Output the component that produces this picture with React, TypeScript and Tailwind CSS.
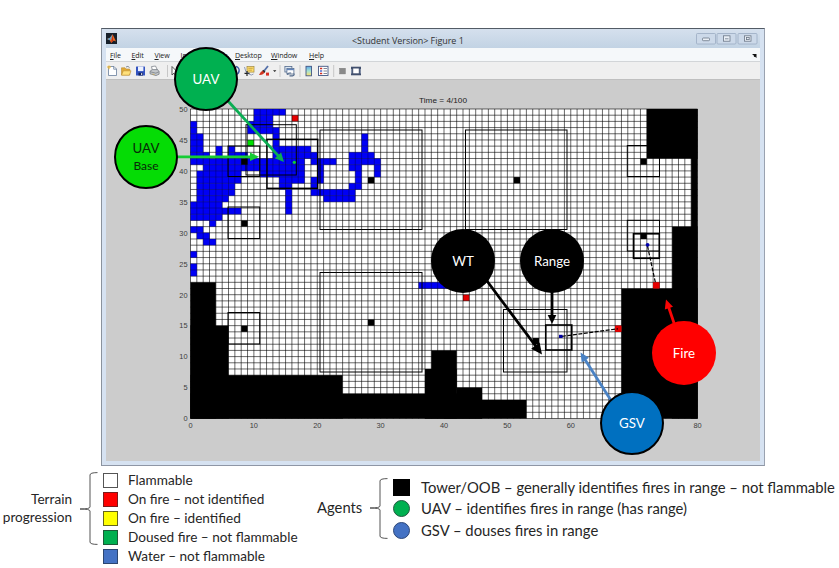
import React from "react";

const CW = 6.3375;
const CH = 6.19;

type Run = [row: number, from: number, to: number];

// Water cells as horizontal runs, counted from the top row
const water: Run[] = [
  [0, 10, 14], [1, 10, 12], [2, 0, 0], [2, 9, 12], [3, 0, 0], [3, 9, 13],
  [4, 0, 1], [4, 13, 13], [5, 0, 1], [5, 13, 13],
  [6, 0, 1], [6, 4, 4], [6, 6, 6], [6, 13, 18],
  [7, 0, 2], [7, 4, 4], [7, 6, 8], [7, 13, 19],
  [8, 0, 17], [8, 19, 22], [9, 2, 17], [9, 20, 20],
  [10, 1, 7], [10, 11, 17], [10, 20, 20],
  [11, 1, 7], [11, 14, 17], [11, 19, 20],
  [12, 1, 6], [12, 14, 15], [12, 19, 19],
  [13, 1, 6], [13, 15, 15], [13, 19, 25],
  [14, 1, 5], [14, 15, 15], [14, 21, 25],
  [15, 0, 4], [15, 15, 15], [16, 0, 7], [16, 15, 15], [17, 0, 4],
  [18, 3, 3], [19, 0, 1], [20, 1, 2], [21, 2, 3], [23, 0, 0], [25, 0, 0], [26, 0, 0],
  [4, 27, 27], [5, 27, 27], [6, 27, 27], [7, 25, 28], [8, 25, 29],
  [9, 25, 26], [9, 29, 29], [10, 26, 26], [10, 29, 29], [11, 26, 26], [12, 25, 26],
  [28, 36, 40],
];

// Out-of-bounds blocks: column, row, width, height
const blocks = [
  [0, 28, 4, 22], [0, 35, 6, 15], [0, 43, 24, 7], [0, 46, 46, 4],
  [37, 42, 1, 8], [38, 39, 4, 11], [37, 42, 5, 8], [42, 45, 4, 5], [40, 47, 13, 3],
  [72, 0, 8, 8], [79, 0, 1, 50], [76, 19, 4, 31], [68, 29, 12, 21],
];

const towers = [[8, 8], [8, 18], [8, 35], [28, 11], [51, 11], [28, 34], [54, 37], [71, 8], [71, 20]];
const fires = [[16, 1], [43, 30], [73, 28], [67, 35]];

// Detection ranges in figure pixels: left, top, right, bottom, stroke width
const ranges = [
  [320, 130, 422, 229.5, 1], [465.5, 130, 567, 229.5, 1], [320, 272.5, 422, 372, 1],
  [503.5, 309.5, 567, 372, 1], [228, 207, 259.7, 238.5, 1], [228, 312.5, 259.7, 344, 1],
  [627.3, 145.5, 659.5, 176.5, 1], [627.3, 220.3, 659.5, 251, 1], [228, 146, 259.7, 176.5, 1],
  [246, 124.7, 296.3, 175, 1], [267, 139.3, 317.7, 188.3, 1.4],
  [545.8, 325, 571.8, 350, 1.6], [633.5, 233.8, 659.3, 258.3, 1.6],
];

const xs = Array.from({ length: 81 }, (_, i) => i);
const ys = Array.from({ length: 51 }, (_, i) => i);

function Plot() {
  return (
    <svg className="block h-[381px] w-[654px]" viewBox="106 80 654 381">
      <g fontFamily="Liberation Sans, Arial, sans-serif" fontSize="7.4" fill="#3c3c3c">
        <text x="443" y="102.6" textAnchor="middle" fill="#222" textLength="48" lengthAdjust="spacingAndGlyphs">Time = 4/100</text>
        {[0, 5, 10, 15, 20, 25, 30, 35, 40, 45, 50].map((v) => (
          <text key={v} x="187.5" y={421.3 - v * CH} textAnchor="end">{v}</text>
        ))}
        {[0, 10, 20, 30, 40, 50, 60, 80].map((v) => (
          <text key={v} x={190.5 + v * CW} y="428.2" textAnchor="middle">{v}</text>
        ))}
      </g>
      <g transform="translate(190.5 109)">
        <rect width="507" height="309.5" fill="#fff" />
        {water.map(([r, a, b], i) => (
          <rect key={i} x={a * CW} y={r * CH} width={(b - a + 1) * CW} height={CH} fill="#0000f5" />
        ))}
        <rect x={9 * CW} y={5 * CH} width={CW} height={CH} fill="#00e000" />
        {fires.map(([c, r]) => (
          <rect key={c} x={c * CW} y={r * CH} width={CW} height={CH} fill="#e60000" />
        ))}
        <g stroke="#000" strokeOpacity="0.66" strokeWidth="0.9">
          {xs.map((i) => <line key={i} x1={i * CW} x2={i * CW} y1="0" y2="309.5" />)}
          {ys.map((i) => <line key={i} y1={i * CH} y2={i * CH} x1="0" x2="507" />)}
        </g>
        {water.map(([r, a, b], i) => (
          <rect key={i} x={a * CW} y={r * CH} width={(b - a + 1) * CW} height={CH} fill="#0000f5" fillOpacity="0.5" />
        ))}
        {blocks.map(([c, r, w, h], i) => (
          <rect key={i} x={c * CW} y={r * CH} width={w * CW} height={h * CH} fill="#000" />
        ))}
        {towers.map(([c, r], i) => (
          <rect key={i} x={c * CW} y={r * CH} width={CW} height={CH} fill="#000" />
        ))}
        {fires.slice(2).map(([c, r]) => (
          <rect key={c} x={c * CW} y={r * CH} width={CW} height={CH} fill="#e60000" />
        ))}
      </g>
      {ranges.map(([l, t, r, b, w], i) => (
        <rect key={i} x={l} y={t} width={r - l} height={b - t} fill="none" stroke="#000" strokeWidth={w} />
      ))}
      <path d="M562 336.3 618 328.8M647.5 246 655.5 283" stroke="#000" strokeWidth="1.2" strokeDasharray="4 1.5" fill="none" />
      <rect x="559" y="334.8" width="3.6" height="3.2" fill="#0000a0" />
      <circle cx="647.6" cy="244.8" r="1.9" fill="#0000b0" />
      <circle cx="294.3" cy="162.3" r="1.6" fill="#10d030" />
    </svg>
  );
}

function Arrow({ x1, y1, x2, y2, color, w = 2.8, head = 9 }: { x1: number; y1: number; x2: number; y2: number; color: string; w?: number; head?: number }) {
  const d = Math.hypot(x2 - x1, y2 - y1);
  const ux = (x2 - x1) / d;
  const uy = (y2 - y1) / d;
  const bx = x2 - ux * head;
  const by = y2 - uy * head;
  const k = head * 0.48;
  return (
    <g fill={color} stroke={color}>
      <line x1={x1} y1={y1} x2={bx + ux} y2={by + uy} strokeWidth={w} />
      <path stroke="none" d={`M${x2} ${y2}L${bx - uy * k} ${by + ux * k}L${bx + uy * k} ${by - ux * k}Z`} />
    </g>
  );
}

function Sep() {
  return <path d="M0 -6V6" stroke="#bcbcbc" strokeWidth="0.8" />;
}

function ToolbarIcons() {
  return (
    <svg className="block h-[18px] w-[260px]" viewBox="106 62 260 18">
      <g transform="translate(112 71)">
        <path d="M-3.5 -4.5H2L4.5 -2V4.5H-3.5Z" fill="#fff" stroke="#687d9c" strokeWidth="0.8" />
        <path d="M1.7 -4.5V-1.8H4.5" fill="none" stroke="#687d9c" strokeWidth="0.8" />
        <path d="M-5 -4H-1M-3 -5.5V-1.8" stroke="#e8b63c" strokeWidth="1.2" />
      </g>
      <g transform="translate(126 71)">
        <path d="M-4.5 4V-3.2H-1L0 -2H3.7V4Z" fill="#e2aa36" stroke="#b88c31" strokeWidth="0.6" />
        <path d="M-4.5 4.2 -2.7 -.2H5L3.4 4.2Z" fill="#ffe07a" stroke="#b88c31" strokeWidth="0.6" />
        <path d="M0 -4Q2 -5.5 3.5 -3.5" stroke="#66707d" strokeWidth="0.8" fill="none" />
      </g>
      <g transform="translate(140.5 71)">
        <rect x="-4.5" y="-4.5" width="9" height="9" fill="#3454c0" rx="0.5" />
        <rect x="-2.5" y="-4.5" width="5.4" height="4.6" fill="#edf2ff" />
        <rect x="-2" y="1.7" width="4.5" height="2.8" fill="#13245e" />
        <rect x="0.7" y="2.1" width="1" height="1.9" fill="#fff" />
      </g>
      <g transform="translate(154.5 71)" stroke="#6e747c" strokeWidth="0.7">
        <path d="M-2 -.5 -3 -4.4 1 -5 3 -.8Z" fill="#fff" />
        <path d="M-4.5 .2 -2 -1.4H3L4.6 .5V3.2L1.5 4.6 -4.5 2.8Z" fill="#c4c8cc" />
        <path d="M-4.2 .8 1.4 2.2 4.4 .7" fill="none" />
        <path d="M-2 3 0 3.6" stroke="#d4a637" />
      </g>
      <g transform="translate(167.5 71)"><Sep /></g>
      <path d="M172 66.5V75L174 73.1 175.5 76 176.7 75.4 175.3 72.7H178Z" fill="#fff" stroke="#333" strokeWidth="0.8" />
      <path d="M236 66.5A4 4 0 1 1 234 74.5" fill="none" stroke="#3b5ca5" strokeWidth="1.5" />
      <g transform="translate(249.5 71)">
        <rect x="-2.5" y="-4.4" width="7" height="5.5" fill="#ffdd6a" stroke="#9e8740" strokeWidth="0.7" />
        <path d="M-1.2 -2.7H3.2M-1.2 -.8H2.4" stroke="#b5903b" strokeWidth="0.7" />
        <path d="M-5 2.4H0M-2.5 0V5" stroke="#222" strokeWidth="1.2" />
        <path d="M-5 -4Q-4.5 1 -1 3T4 3" fill="none" stroke="#4d6290" strokeWidth="0.6" />
      </g>
      <g transform="translate(264 71)">
        <path d="M4 -5 0 0" stroke="#536fa9" strokeWidth="1.8" />
        <path d="M-5 4Q-3.5 .2 -1 -.6L1 1Q-1 4.5 -5 4Z" fill="#cf3520" />
        <path d="M-1.2 -.8 1 1.1" stroke="#292929" strokeWidth="1.4" />
        <rect x="2" y="1.6" width="3" height="3" fill="#d92e24" />
      </g>
      <path d="M273 70.2H276.4L274.7 72.1Z" fill="#222" />
      <g transform="translate(280 71)"><Sep /></g>
      <g transform="translate(289.5 71)" stroke="#52698b" strokeWidth="0.8">
        <rect x="-4.6" y="-4.6" width="7" height="5.6" fill="#dce7f4" />
        <rect x="-2.6" y="-2.6" width="7" height="5.6" fill="#fff" />
        <path d="M-2.6 -1.5H4.4" stroke="#6183bb" strokeWidth="1.4" />
        <path d="M-1.7 3.8Q-2.2 2 0 2H1.7M0 4.8H3Q5 4.5 4.5 2.7" fill="none" strokeWidth="1.2" />
      </g>
      <g transform="translate(300 71)"><Sep /></g>
      <defs>
        <linearGradient id="colorbar" x2="0" y2="1">
          <stop stopColor="#5ca8e8" /><stop offset="0.5" stopColor="#a8e3d3" /><stop offset="1" stopColor="#ffe16b" />
        </linearGradient>
      </defs>
      <rect x="306" y="66.3" width="5.5" height="9.5" fill="url(#colorbar)" stroke="#405684" strokeWidth="0.9" />
      <rect x="318.5" y="66.3" width="9.5" height="9.2" fill="#fff" stroke="#435784" strokeWidth="0.9" />
      <path d="M320 68.5H322.2M320 73.5H322.2" stroke="#d22c22" strokeWidth="1.5" />
      <path d="M320 71H322.2" stroke="#3351c4" strokeWidth="1.3" />
      <path d="M323.5 68.5H327M323.5 71H327M323.5 73.5H327" stroke="#656b7d" strokeWidth="0.8" />
      <g transform="translate(333.7 71)"><Sep /></g>
      <rect x="339.7" y="68.3" width="5.6" height="5.6" fill="#898989" stroke="#777" strokeWidth="0.5" />
      <rect x="351" y="66.7" width="10" height="8.6" fill="#42506e" />
      <rect x="353.2" y="68.5" width="5.6" height="4.8" fill="#fff" />
      <path d="M351.7 69V73.5M360.3 69V73.5" stroke="#b3bed2" strokeWidth="0.7" />
    </svg>
  );
}

function FigureWindow() {
  return (
    <div className="ml-[101px] flex h-[438px] w-[664px] flex-col border border-t-[#525b66] border-r-[#9aa2b0] border-b-[#8e96a5] border-l-[#8a929d] bg-[#d6e2f1] px-1">
      <div className="flex h-[19px] items-center bg-gradient-to-b from-[#d5e0ed] to-[#c2d3e4]">
        <svg className="h-[11px] w-[11px]" viewBox="0 0 11 11">
          <rect width="11" height="11" fill="#17202a" />
          <path d="M1 6 4 4.8 6.6 1.2 10 8.5 7.8 7.6 5.2 10 3.8 7.3Z" fill="#ee6a21" />
          <path d="M1 6 4 4.8 6.6 1.2 5.2 6.4 3.8 7.3Z" fill="#5ea2ca" />
          <path d="M6.6 1.2 7 7.9 5.2 10Z" fill="#b72c17" />
        </svg>
        <div className="mt-1 ml-[235px] font-['Open_Sans',sans-serif] text-[9px] leading-none tracking-[-0.05px] whitespace-nowrap text-[#333]">&lt;Student Version&gt; Figure 1</div>
        <svg className="mt-px mr-px ml-auto h-[12px] w-[63px]" viewBox="0 0 63 12">
          <g fill="#ccd9e9" stroke="#9aabc1" strokeWidth="0.8">
            <rect x="0.5" y="0.5" width="19" height="10.5" rx="1" />
            <rect x="21" y="0.5" width="19" height="10.5" rx="1" />
            <rect x="42" y="0.5" width="19" height="10.5" rx="1" />
          </g>
          <g fill="#e9eff6" stroke="#6a7686" strokeWidth="0.8">
            <rect x="6.5" y="5" width="7" height="2.7" rx="0.8" />
            <rect x="27.5" y="2.8" width="6.5" height="5.4" />
            <path d="M29 5.8H32.5" />
            <rect x="48.5" y="2.8" width="6.5" height="5.4" />
            <rect x="50.4" y="4.4" width="2.8" height="2.2" />
          </g>
        </svg>
      </div>
      <div className="flex h-[14px] items-center border-b border-[#d2d5d8] bg-[#f5f8fa] pt-[2px] pl-[4px] font-['Open_Sans',sans-serif] text-[7.1px] leading-none tracking-[-0.1px] text-[#222]">
        <span className="w-[21.5px]"><u>F</u>ile</span>
        <span className="w-[23px]"><u>E</u>dit</span>
        <span className="w-[26px]"><u>V</u>iew</span>
        <span className="w-[30px]"><u>I</u>nsert</span>
        <span className="w-[24.5px]"><u>T</u>ools</span>
        <span className="w-[36px]"><u>D</u>esktop</span>
        <span className="w-[38px]"><u>W</u>indow</span>
        <span><u>H</u>elp</span>
        <svg className="mr-[3px] ml-auto h-[5px] w-[5px]" viewBox="0 0 5 5"><path d="M0 1H4.5V5L3 3.7 2 4 1.8 2.6Z" fill="#111" /></svg>
      </div>
      <div className="h-[18px] border-b border-[#bfbfbf] bg-[#efefef]">
        <ToolbarIcons />
      </div>
      <div className="h-[381px] bg-[#ccc]">
        <Plot />
      </div>
    </div>
  );
}

function Callouts() {
  const base = "absolute flex h-[64px] w-[64px] flex-col items-center justify-center rounded-full text-[13.3px]";
  return (
    <div className="absolute inset-0 font-[Lato,sans-serif] leading-[17px] text-white">
      <svg className="absolute inset-0 h-[568px] w-[839px]" viewBox="0 0 839 568">
        <Arrow x1={228} y1={101} x2={284} y2={162} color="#0bad53" />
        <Arrow x1={177} y1={156.8} x2={259} y2={156.8} color="#16cc34" />
        <Arrow x1={487} y1={281} x2={542} y2={354.5} color="#000" w={2.8} head={11} />
        <Arrow x1={552} y1={290} x2={552} y2={324} color="#000" />
        <Arrow x1={675} y1={326} x2={666} y2={299.5} color="#fa0505" />
        <Arrow x1={612} y1={402} x2={580.5} y2={352.5} color="#4a82c4" />
      </svg>
      <div className={`${base} top-[47px] left-[174px] border-[2.5px] border-black bg-[#00b050]`}>UAV</div>
      <div className={`${base} top-[125px] left-[114px] border-[2.5px] border-black bg-[#05dc05] text-[#082808]`}>
        <span>UAV</span><span className="text-[12px]">Base</span>
      </div>
      <div className={`${base} top-[229px] left-[431px] bg-black`}>WT</div>
      <div className={`${base} top-[229px] left-[520px] bg-black`}>Range</div>
      <div className={`${base} top-[321px] left-[652px] bg-[#ff0000]`}>Fire</div>
      <div className={`${base} top-[391px] left-[600px] border-[2.5px] border-black bg-[#0070c0]`}>GSV</div>
    </div>
  );
}

function Brace({ h, mid }: { h: number; mid: number }) {
  return (
    <svg className="block w-[18px] shrink-0" height={h} viewBox={`0 0 18 ${h}`}>
      <path d={`M17.5 .6Q10 .6 10 3V${mid - 2}Q10 ${mid} 0 ${mid}Q10 ${mid} 10 ${mid + 2}V${h - 3}Q10 ${h - 0.6} 17.5 ${h - 0.6}`} fill="none" stroke="#555" strokeWidth="1" />
    </svg>
  );
}

function Legend() {
  return (
    <div className="flex h-[102px] font-[Lato,sans-serif] text-[13.6px] text-[#262626]">
      <div className="w-[72px] shrink-0 pt-[25px] text-right leading-[17.5px]">Terrain<br />progression</div>
      <div className="ml-[8px] pt-[6px]"><Brace h={73} mid={37} /></div>
      <div className="ml-[5px] w-[213px] shrink-0 pt-[4.5px] leading-[19.2px] whitespace-nowrap">
        <div className="flex items-center gap-[10px]"><i className="h-[15px] w-[15px] border border-[#555] bg-white" />Flammable</div>
        <div className="flex items-center gap-[10px]"><i className="h-[15px] w-[15px] border border-[#7a1c1c] bg-[#ff0000]" />On fire – not identified</div>
        <div className="flex items-center gap-[10px]"><i className="h-[15px] w-[15px] border border-[#66661c] bg-[#ffff00]" />On fire – identified</div>
        <div className="flex items-center gap-[10px]"><i className="h-[15px] w-[15px] border border-[#1c5a38] bg-[#00b050]" />Doused fire – not flammable</div>
        <div className="flex items-center gap-[10px]"><i className="h-[15px] w-[15px] border border-[#2c4670] bg-[#4472c4]" />Water – not flammable</div>
      </div>
      <div className="pt-[31px] pl-px text-[14.8px] leading-[20px]">Agents</div>
      <div className="ml-auto pt-[12px] pr-[5px]"><Brace h={61} mid={30} /></div>
      <div className="w-[446px] shrink-0 pt-[11px] text-[14.82px] leading-[21.3px] whitespace-nowrap">
        <div className="flex items-center gap-[11px]"><i className="h-[17px] w-[17px] bg-black" />Tower/OOB – generally identifies fires in range – not flammable</div>
        <div className="flex items-center gap-[11px]"><i className="h-[17px] w-[17px] rounded-full border border-[#245840] bg-[#00b050]" />UAV – identifies fires in range (has range)</div>
        <div className="flex items-center gap-[11px]"><i className="h-[17px] w-[17px] rounded-full border border-[#2d4778] bg-[#4472c4]" />GSV – douses fires in range</div>
      </div>
    </div>
  );
}

export default function App() {
  return (
    <main className="relative h-[568px] w-[839px] overflow-hidden bg-white pt-[28px]">
      <FigureWindow />
      <Legend />
      <Callouts />
    </main>
  );
}
